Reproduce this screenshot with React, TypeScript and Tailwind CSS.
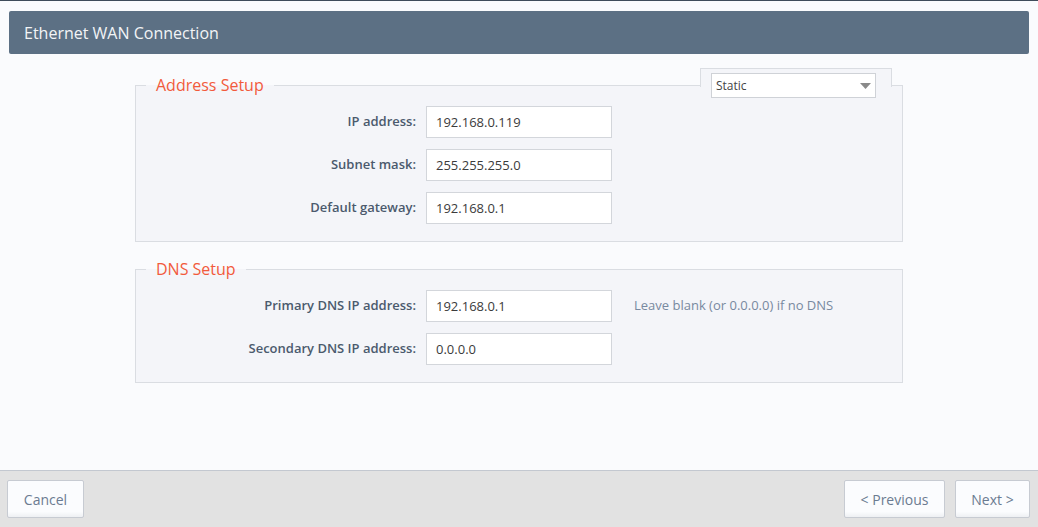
import { type ReactNode } from 'react';

const font = { fontFamily: '"Open Sans", "Liberation Sans", sans-serif' };

function Field({ label, value, hint }: { label: string; value: string; hint?: string }) {
  return (
    <div className="flex items-center h-8">
      <label className="w-[290px] pr-[10px] text-right text-[13px] font-semibold text-[#4b5a6d]">{label}</label>
      <input
        readOnly
        value={value}
        className="w-[186px] h-8 px-[9px] bg-white border border-[#d3d6db] text-[13px] text-[#3b3b3b] outline-none"
      />
      {hint && <span className="ml-[22px] text-[13px] text-[#7889a0]">{hint}</span>}
    </div>
  );
}

function Section({ title, children, aside }: { title: string; children: ReactNode; aside?: ReactNode }) {
  return (
    <fieldset className="relative border border-[#dadde2] bg-[#f4f5f9] pt-[10px] pb-[17px]">
      <legend className="ml-[10px] px-[10px] text-[16px] leading-[22px] text-[#f25a3c]">{title}</legend>
      {aside}
      <div className="flex flex-col gap-[11px]">{children}</div>
    </fieldset>
  );
}

function Button({ children, className }: { children: ReactNode; className?: string }) {
  return (
    <button
      className={`h-[38px] border border-[#c7cbd2] rounded-[2px] bg-gradient-to-b from-[#fbfcfe] from-85% to-[#eef0f3] text-[14px] text-[#6b7b91] ${className ?? ''}`}
    >
      {children}
    </button>
  );
}

export default function App() {
  return (
    <div style={font} className="h-screen flex flex-col bg-[#fafbfd] border-t border-[#3f4c5a]">
      <div className="flex-1 px-[9px] pt-[10px]">
        <div className="h-[43px] rounded-[2px] bg-[#5c7084] flex items-center pl-[15px] text-[16px] text-[#f2f4f6]">
          Ethernet WAN Connection
        </div>

        <div className="w-[768px] mx-auto mt-[20px] flex flex-col gap-[16px]">
          <Section
            title="Address Setup"
            aside={
              <div className="absolute left-[564px] top-[-28px] w-[192px] h-[19px] border border-b-0 border-[#dadde2] bg-[#f4f5f9]">
                <div className="absolute left-[10px] top-[4px] w-[165px] h-[25px] bg-white border border-[#cfd2d7] flex items-center justify-between pl-[4px] pr-[4px]">
                  <span className="text-[12px] text-[#444]">Static</span>
                  <svg width="11" height="6" viewBox="0 0 11 6">
                    <path d="M0 0h11L5.5 6z" fill="#8a8a8a" />
                  </svg>
                </div>
              </div>
            }
          >
            <Field label="IP address:" value="192.168.0.119" />
            <Field label="Subnet mask:" value="255.255.255.0" />
            <Field label="Default gateway:" value="192.168.0.1" />
          </Section>

          <Section title="DNS Setup">
            <Field label="Primary DNS IP address:" value="192.168.0.1" hint="Leave blank (or 0.0.0.0) if no DNS" />
            <Field label="Secondary DNS IP address:" value="0.0.0.0" />
          </Section>
        </div>
      </div>

      <div className="h-[57px] shrink-0 border-t border-[#c3c8d0] bg-[#e2e2e2] flex items-center px-[7px] pr-[8px]">
        <Button className="w-[77px]">Cancel</Button>
        <div className="ml-auto flex gap-[10px]">
          <Button className="w-[101px]">&lt; Previous</Button>
          <Button className="w-[75px]">Next &gt;</Button>
        </div>
      </div>
    </div>
  );
}
